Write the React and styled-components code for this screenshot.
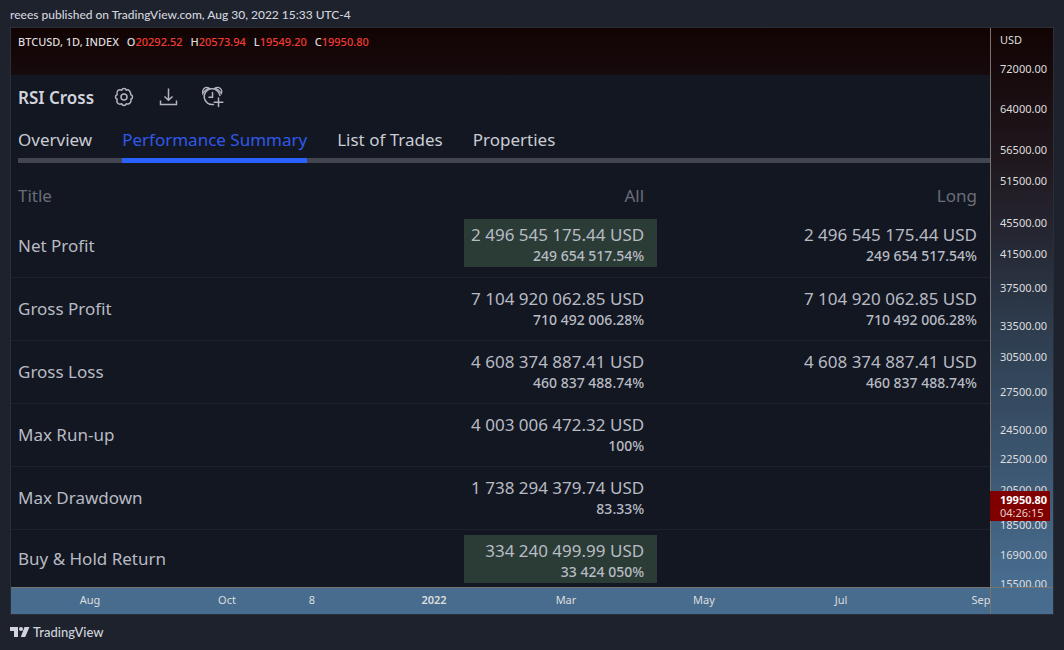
import React from "react";
import styled, { createGlobalStyle } from "styled-components";

const GlobalStyle = createGlobalStyle`
  * {
    box-sizing: border-box;
  }

  body {
    margin: 0;
    background-color: #1e222d;
    color: #d1d4dc;
    font-family: "Trebuchet MS", "Noto Sans", sans-serif;
    font-size: 12px;
  }
`

const Page = styled.div`
  padding: 0 10px;
`

const Published = styled.header`
  height: 27px;
  padding-top: 3px;
  font-family: "Trebuchet MS", Lato, sans-serif;
  font-size: 12px;
  font-weight: 500;
  line-height: 24px;
`

const Chart = styled.main`
  display: grid;
  grid-template-columns: minmax(0, 1fr) 63px;
  border: 1px solid #2a2e39;
  background: linear-gradient(#120303, #20171d 22%, #252733 36%, #2d3b4c 50%, #486c8e 94%);
`

const Legend = styled.div`
  display: flex;
  gap: 8px;
  height: 47px;
  padding: 4px 7px;
  font-size: 11px;
  font-weight: 500;
  line-height: 20px;
  color: #dcdcdc;

  span span {
    color: #f23b32;
  }
`

const Report = styled.section`
  background-color: #131722;
  color: #b8bbc3;
  font-size: 17px;
`

const ReportHead = styled.div`
  display: flex;
  align-items: center;
  height: 44px;
  padding-left: 7px;

  h1 {
    margin: 0 20px 0 0;
    font-size: 17px;
    font-weight: 600;
    color: #d1d4dc;
  }
`

const IconButton = styled.button`
  display: flex;
  margin-right: 24px;
  padding: 0;
  border: none;
  background: none;
  color: #b2b5be;
`

const Tabs = styled.nav`
  display: flex;
  gap: 30px;
  margin-left: 7px;
  background: linear-gradient(#434651, #434651) bottom / 100% 5px no-repeat;
`

const Tab = styled.button`
  height: 44px;
  padding: 4px 0 8px;
  border: none;
  background: linear-gradient(#2962ff, #2962ff) bottom / 100% ${props => props.$active ? "5px" : "0"} no-repeat;
  color: ${props => props.$active ? "#3158e8" : "#c9ccd4"};
  font-family: inherit;
  font-size: 17px;
`

const Table = styled.table`
  width: 100%;
  border-collapse: collapse;
  table-layout: fixed;

  th {
    padding: 0 13px 0 7px;
    font-weight: 400;
    text-align: right;
  }

  th:first-child {
    width: 33%;
    text-align: left;
  }

  thead th {
    height: 51px;
    padding-top: 14px;
    color: #6a6d78;
  }

  th:last-child {
    width: 34%;
  }

  tbody tr {
    height: 63px;
    border-bottom: 1px solid #1e222d;
  }

  tbody tr:last-child {
    height: 58px;
    border: none;
  }
`

const Cell = styled.td`
  padding: 0;
  vertical-align: top;
`

const Amount = styled.div`
  width: ${props => props.$marked ? "193px" : "auto"};
  margin: 5px 0 0 auto;
  padding: 5px 13px 0 0;
  height: 48px;
  background-color: ${props => props.$marked ? "#2b3b36" : "transparent"};
  line-height: 21px;
  text-align: right;
  white-space: nowrap;

  small {
    display: block;
    font-size: 14px;
    font-weight: 500;
  }
`

const PriceAxis = styled.aside`
  position: relative;
  display: flex;
  flex-direction: column;
  border-left: 1px solid #77736f;
  font-size: 11px;
  line-height: 20px;
  color: #dedede;
`

const Currency = styled.div`
  height: 31px;
  padding: 2px 9px;
`

const Prices = styled.ul`
  flex: 1;
  display: flex;
  flex-direction: column;
  margin: 0;
  padding: 0 0 0 9px;
  list-style: none;
  overflow: hidden;

  li {
    flex-basis: 0;
    min-height: 0;
  }

  li:last-child {
    flex: 0 0 13px;
  }
`

const LastPrice = styled.div`
  position: absolute;
  top: 463px;
  left: -1px;
  width: 60px;
  padding: 2px 0 2px 10px;
  background-color: #800000;
  line-height: 13px;
  color: #e8cccc;

  strong {
    display: block;
    color: #ffffff;
  }
`

const TimeAxis = styled.div`
  display: flex;
  height: 27px;
  border-top: 1px solid #77736f;
  background-color: #486c8e;
  overflow: hidden;
  font-size: 11px;
  line-height: 24px;
  color: #dedede;
`

const Time = styled.span`
  flex: ${props => props.$span} 0 0;
  display: flex;
  justify-content: flex-end;
  min-width: 0;
  font-weight: ${props => props.$year ? 600 : 400};

  span {
    flex: none;
    width: 40px;
    margin-right: -20px;
    text-align: center;
  }
`

const Corner = styled.div`
  border-top: 1px solid #77736f;
  border-left: 1px solid #77736f;
  background-color: #486c8e;
`

const Footer = styled.footer`
  display: flex;
  align-items: center;
  gap: 3px;
  height: 34px;
  font-family: "Trebuchet MS", Lato, sans-serif;
  font-size: 13px;
  font-weight: 500;
`

const rows = [
  { title: "Net Profit", all: ["2 496 545 175.44 USD", "249 654 517.54%"], long: ["2 496 545 175.44 USD", "249 654 517.54%"], marked: true },
  { title: "Gross Profit", all: ["7 104 920 062.85 USD", "710 492 006.28%"], long: ["7 104 920 062.85 USD", "710 492 006.28%"] },
  { title: "Gross Loss", all: ["4 608 374 887.41 USD", "460 837 488.74%"], long: ["4 608 374 887.41 USD", "460 837 488.74%"] },
  { title: "Max Run-up", all: ["4 003 006 472.32 USD", "100%"] },
  { title: "Max Drawdown", all: ["1 738 294 379.74 USD", "83.33%"] },
  { title: "Buy & Hold Return", all: ["334 240 499.99 USD", "33 424 050%"], marked: true },
]

const prices = [72000, 64000, 56500, 51500, 45500, 41500, 37500, 33500, 30500, 27500, 24500, 22500, 20500, 18500, 16900, 15500]

const times = [
  { label: "Aug", span: 79 },
  { label: "Oct", span: 137 },
  { label: "8", span: 85 },
  { label: "2022", span: 122, year: true },
  { label: "Mar", span: 132 },
  { label: "May", span: 138 },
  { label: "Jul", span: 137 },
  { label: "Sep", span: 140 },
]

const tabs = ["Overview", "Performance Summary", "List of Trades", "Properties"]

// log scale: the space under a price is the log of its ratio to the next one
const priceGap = (i) => i < prices.length - 1 ? Math.log(prices[i] / prices[i + 1]) * 100 : 0

const GearIcon = () => (
  <svg width="20" height="20" viewBox="0 0 20 20" fill="none" stroke="currentColor" strokeWidth="1.5" strokeLinejoin="round">
    <path d="M7.7 3.2C8.3 .9 11.7 .9 12.3 3.2C14.4 2 16.9 4.4 16.8 7.7C19.1 8.3 19.1 11.7 16.8 12.3C18 14.4 15.6 18 12.3 16.8C11.7 19.1 8.3 19.1 7.7 16.8C4.4 18 2 15.6 3.2 12.3C.9 11.7 .9 8.3 3.2 7.7C2 4.4 4.4 2 7.7 3.2Z" />
    <circle cx="10" cy="10" r="3" />
  </svg>
)

const DownloadIcon = () => (
  <svg width="20" height="20" viewBox="0 0 20 20" fill="none" stroke="currentColor" strokeWidth="1.5">
    <path d="M10.5 1.5V13M6.5 9.5L10.5 13.2L14.5 9.5M2.5 13.5V17.5H18.5V13.5" />
  </svg>
)

const AlarmIcon = () => (
  <svg width="24" height="22" viewBox="1 0 24 22" fill="none" stroke="currentColor" strokeWidth="1.5" strokeLinecap="round">
    <path d="M18.9 9.5A7.9 7.9 0 1 0 12.5 18.4" />
    <path d="M1.8 7.6C.8 3.6 4 -.4 8.4 2.3C5.5 3 3 5 1.8 7.6ZM20.2 7.6C22.2 3.6 18 -.4 13.6 2.3C16.5 3 19 5 20.2 7.6Z" strokeWidth="1.3" />
    <path d="M11.5 6.5V11.3H8M17.5 12V20.5M13.2 16.3H21.8" />
  </svg>
)

const Logo = () => (
  <svg width="20" height="12" viewBox="0 0 20 12" fill="currentColor">
    <path d="M0 1H8V11H4V5H0ZM14.5 1H19.5L15.2 11H10.8Z" />
    <circle cx="11" cy="3" r="2" />
  </svg>
)

class App extends React.Component {
  render() {
    return (
      <Page>
        <GlobalStyle />
        <Published>reees published on TradingView.com, Aug 30, 2022 15:33 UTC-4</Published>
        <Chart>
          <div>
            <Legend>
              <span>BTCUSD, 1D, INDEX</span>
              <span>O<span>20292.52</span></span>
              <span>H<span>20573.94</span></span>
              <span>L<span>19549.20</span></span>
              <span>C<span>19950.80</span></span>
            </Legend>
            <Report>
              <ReportHead>
                <h1>RSI Cross</h1>
                <IconButton aria-label="Settings"><GearIcon /></IconButton>
                <IconButton aria-label="Download"><DownloadIcon /></IconButton>
                <IconButton aria-label="Add alert"><AlarmIcon /></IconButton>
              </ReportHead>
              <Tabs>
                {tabs.map(tab => (
                  <Tab key={tab} $active={tab === "Performance Summary"}>{tab}</Tab>
                ))}
              </Tabs>
              <Table>
                <thead>
                  <tr>
                    <th scope="col">Title</th>
                    <th scope="col">All</th>
                    <th scope="col">Long</th>
                  </tr>
                </thead>
                <tbody>
                  {rows.map(row => (
                    <tr key={row.title}>
                      <th scope="row">{row.title}</th>
                      <Cell>
                        <Amount $marked={row.marked}>
                          {row.all[0]}
                          <small>{row.all[1]}</small>
                        </Amount>
                      </Cell>
                      <Cell>
                        {row.long && (
                          <Amount>
                            {row.long[0]}
                            <small>{row.long[1]}</small>
                          </Amount>
                        )}
                      </Cell>
                    </tr>
                  ))}
                </tbody>
              </Table>
            </Report>
          </div>
          <PriceAxis>
            <Currency>USD</Currency>
            <Prices>
              {prices.map((price, i) => (
                <li key={price} style={{ flexGrow: priceGap(i) }}>{price.toFixed(2)}</li>
              ))}
            </Prices>
            <LastPrice>
              <strong>19950.80</strong>
              04:26:15
            </LastPrice>
          </PriceAxis>
          <TimeAxis>
            {times.map(time => (
              <Time key={time.label} $span={time.span} $year={time.year}>
                <span>{time.label}</span>
              </Time>
            ))}
            <Time $span={9} />
          </TimeAxis>
          <Corner />
        </Chart>
        <Footer>
          <Logo />
          TradingView
        </Footer>
      </Page>
    )
  }
}

export default App;
